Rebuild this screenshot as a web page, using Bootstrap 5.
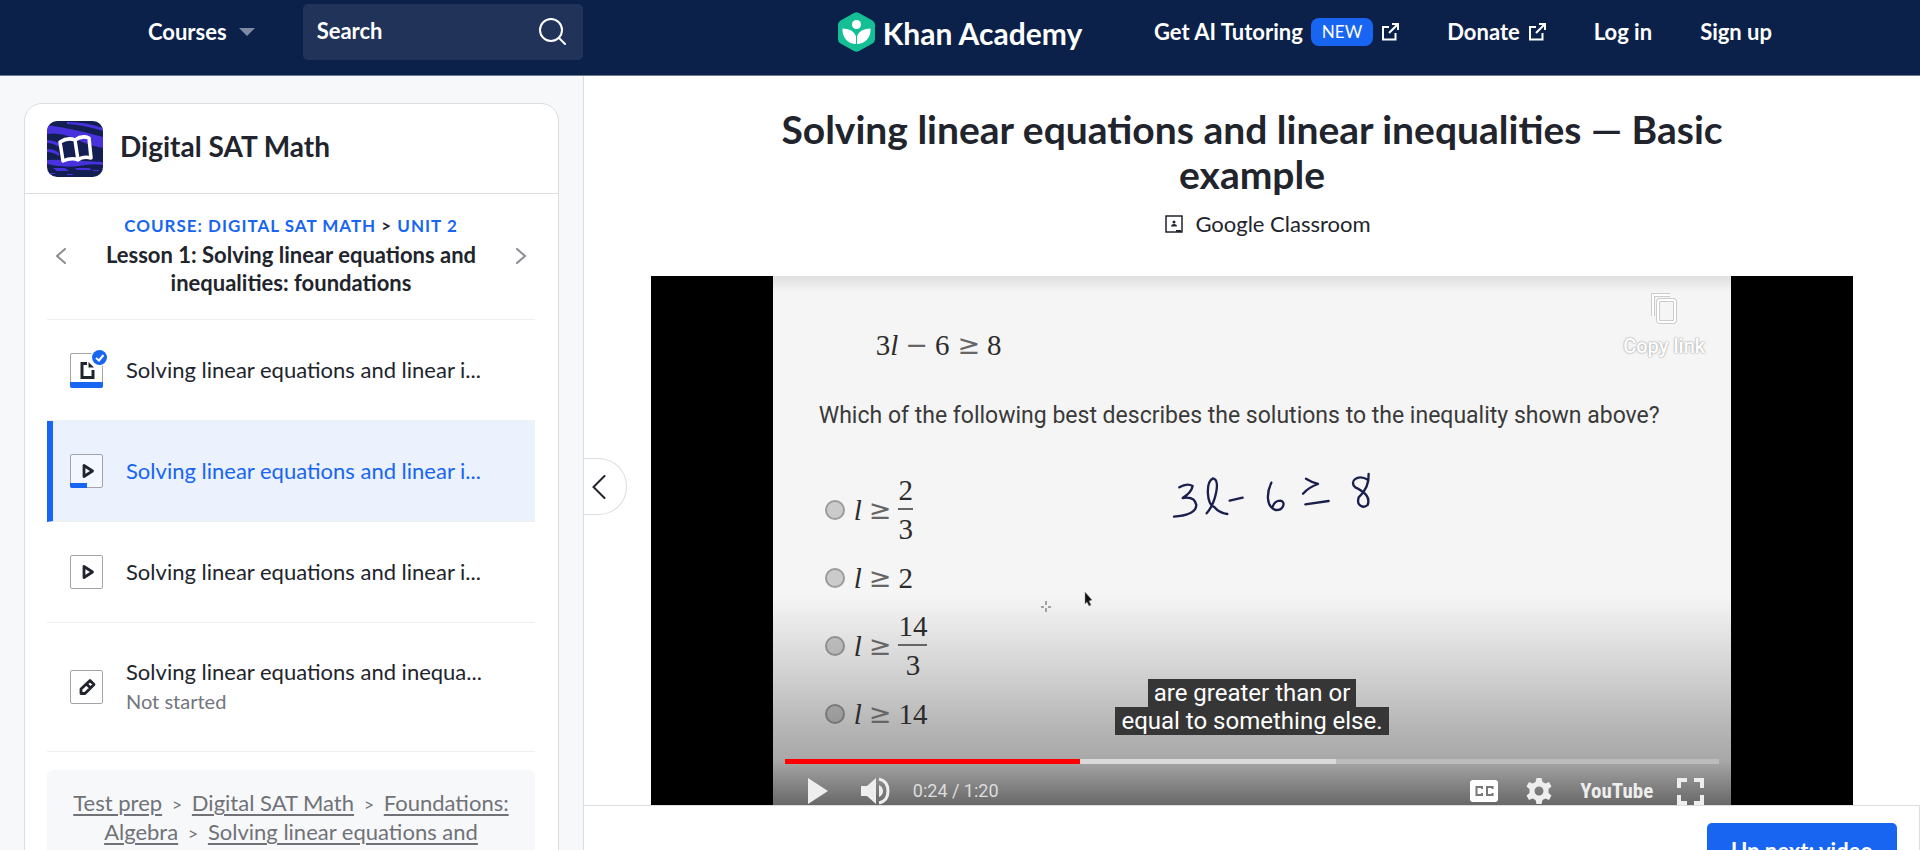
<!DOCTYPE html>
<html lang="en">
<head>
<meta charset="utf-8">
<meta name="viewport" content="width=device-width, initial-scale=1">
<title>Solving linear equations and linear inequalities — Basic example | Khan Academy</title>
<link href="https://cdn.jsdelivr.net/npm/bootstrap@5.3.0/dist/css/bootstrap.min.css" rel="stylesheet">
<style>
  :root { --ka-blue: #1865f2; --ka-navy: #0b2149; --ka-ink: #21242c; --ka-line: #dcdddf; --ka-soft: #f7f8fa; }
  body { font-family: Lato, "Open Sans", sans-serif; font-size: 22px; line-height: 28px; color: var(--ka-ink); }
  svg { display: block; flex: none; }

  /* Top bar */
  .site-bar { background: var(--ka-navy); padding: 4px 148px 15px; border-bottom: 1px solid #6c7a98; }
  .site-bar a, .site-bar button { color: #fff; font-weight: 700; text-decoration: none; }
  .side-group { flex: 1 1 0; }
  .search-box { width: 280px; height: 56px; background: #213358; border-radius: 5px; padding: 0 16px 2px 14px; margin-left: 48px; }
  .search-box input { font-weight: 700; color: #fff; outline: 0; line-height: 28px; }
  .search-box input::placeholder { color: #fff; opacity: 1; }
  .brand-name { font-size: 30px; line-height: 36px; padding-top: 2px; }
  .new-pill { background: var(--ka-blue); font-size: 17px; line-height: 28px; font-weight: 400; border-radius: 8px; padding: 0 11px; }

  /* Lesson sidebar */
  .lesson-side { width: 584px; flex: none; background: var(--ka-soft); border-right: 1px solid var(--ka-line); padding: 27px 24px 0; }
  .lesson-card { background: #fff; border: 1px solid var(--ka-line); border-radius: 18px 18px 0 0; }
  .course-head { padding: 17px 22px 16px; border-bottom: 1px solid var(--ka-line); gap: 17px; }
  .course-head h2 { font-size: 28px; line-height: 34px; font-weight: 700; margin: 0 0 6px; }
  .card-inner { padding: 0 23px 0 22px; }
  .lesson-nav { padding: 17px 0 22px; border-bottom: 1px solid #eeeff0; }
  .lesson-nav h3 { font-size: 22px; line-height: 28px; font-weight: 700; margin: 0; }
  .crumb-label { font-size: 17px; font-weight: 700; line-height: 30px; letter-spacing: 1px; text-transform: uppercase; }
  .crumb-label a { color: var(--ka-blue); text-decoration: none; }
  .nav-step { width: 28px; padding-top: 4px; color: #8b8d93; }
  .lesson-item { min-height: 101px; padding-left: 23px; gap: 23px; border-bottom: 1px solid #eeeff0; color: var(--ka-ink); text-decoration: none; }
  .lesson-item.current { background: #ebf2fe; color: var(--ka-blue); padding-left: 17px; border-left: 6px solid var(--ka-blue); }
  .lesson-item.tall { min-height: 129px; }
  .item-note { font-size: 20px; line-height: 30px; color: #73757c; }
  .trail-box { background: var(--ka-soft); border-radius: 6px; margin-top: 18px; padding: 19px 20px; text-align: center; color: #707278; }
  .trail-box a { color: #707278; text-underline-offset: 3px; }
  .trail-box span { font-size: 18px; margin: 0 4px; }

  /* Lesson content */
  .side-toggle { left: 0; top: 382px; width: 43px; height: 57px; background: #fff; border: 1px solid var(--ka-line); border-left: 0; border-radius: 0 28px 28px 0; padding: 0 0 0 8px; }
  .content-scroll { padding: 31px 5% 0; }
  .content-scroll h1 { font-size: 39px; line-height: 45px; font-weight: 700; max-width: 1000px; margin: 0 auto 13px; }
  .share-row { padding-left: 32px; }
  .classroom { color: var(--ka-ink); text-decoration: none; gap: 12px; }
  .player { background: #000; margin-top: 38px; padding: 0 122px; }
  .frame-area { color: #2c2c2c; padding-top: 44px; background:
      linear-gradient(#dfdfdf, #f5f5f500 16px),
      linear-gradient(#f5f5f500 320px, #e1e1e1 364px, #cbcbcb 410px, #b4b4b4 454px, #a8a8a8 484px, #888 506px, #646464 532px), #f5f5f5; }
  .math { font-family: "Liberation Serif", serif; font-size: 29px; line-height: 30px; }
  .math i { margin-right: 7px; }
  .rel { font-family: "DejaVu Sans", sans-serif; font-size: 27px; color: #666; margin-right: 7px; }
  .formula { height: 50px; padding-left: 103px; }
  .question { font-family: Roboto, sans-serif; font-size: 23px; line-height: 32px; margin: 30px 0 44px; padding-left: 46px; color: #3a3a3a; }
  .choices { padding-left: 52px; }
  .choice { height: 68px; }
  .choice input { appearance: none; width: 20px; height: 20px; border: 2px solid #0000003d; border-radius: 50%; background: #0000002b; margin: 0 9px 0 0; }
  .frac { line-height: 29px; text-align: center; }
  .frac span { display: block; padding-top: 5px; }
  .frac span:first-child { border-bottom: 2px solid #666; padding-top: 0; padding-bottom: 3px; }
  .ink-layer { left: 26%; top: 194px; }
  .copy-link { right: 26px; top: 16px; color: #fff; font: 500 20px/28px Roboto, sans-serif; text-shadow: 0 0 2px #777; }
  .caption-box { left: 0; right: 0; top: 403px; color: #fff; font: 24px/28px Roboto, sans-serif; }
  .caption-box span { background: #363636; padding: 0 6px; }
  .seek { height: 5px; margin: 11px 12px 0; background: #bcbcbc; }
  .control-row { height: 54px; padding: 0 27px 0 34px; color: #eee; }
  .time-text { font: 18px/24px Roboto, sans-serif; margin-left: 22px; color: #ddd; }
  .yt-word { font: 700 21px/26px "Liberation Sans Narrow", "Roboto Condensed", "DejaVu Sans Condensed", sans-serif; color: #eee; text-decoration: none; }
  .next-bar { height: 45px; border-top: 1px solid var(--ka-line); border-right: 1px solid var(--ka-line); background: #fff; padding: 17px 22px 0; }
  .btn-next { background: var(--ka-blue); color: #fff; border: 0; border-radius: 5px; height: 56px; padding: 0 24px; font-size: 22px; font-weight: 700; }
</style>
</head>
<body class="vh-100 overflow-hidden d-flex flex-column">

<header class="site-bar d-flex align-items-center">
  <div class="side-group d-flex align-items-center">
    <button type="button" class="border-0 bg-transparent p-0 d-flex align-items-center gap-2">
      <span>Courses</span>
      <svg class="ms-1" width="16" height="8" viewBox="0 0 16 8"><path d="M0 0h16L8 8z" fill="#7d8aa3"/></svg>
    </button>
    <form class="search-box d-flex align-items-center" role="search">
      <input class="border-0 bg-transparent p-0 flex-grow-1 w-50" type="search" placeholder="Search" aria-label="Search">
      <svg width="28" height="28" viewBox="0 0 28 28" fill="none" stroke="#fff" stroke-width="2" stroke-linecap="round"><circle cx="12" cy="13" r="11"/><path d="M20 21 26 27"/></svg>
    </form>
  </div>
  <a href="#" class="d-flex align-items-center gap-2">
    <svg width="37" height="40" viewBox="0 0 37 40"><path d="M16 1Q18.500-.5 21 1L34.500 8.500Q37 10 37 13V27Q37 30 34.500 31.500L21 39Q18.500 40.500 16 39L2.500 31.500Q0 30 0 27V13Q0 10 2.500 8.500z" fill="#14bf96"/><circle cx="18.500" cy="12.500" r="4.500" fill="#fff"/><path d="M4.500 16.500C12 16.500 17.500 20 18.500 26.500 19.500 20 25 16.500 32.500 16.500 33 26 27 32 18.500 32S4 26 4.500 16.500z" fill="#fff"/><path d="M18.500 20v12" stroke="#14bf96" stroke-width="1"/></svg>
    <span class="brand-name">Khan Academy</span>
  </a>
  <nav class="side-group d-flex align-items-center justify-content-end" aria-label="Account">
    <a href="#" class="d-flex align-items-center gap-2 me-5">Get AI Tutoring <span class="new-pill">NEW</span>
      <svg width="18" height="18" viewBox="0 0 18 18" fill="none" stroke="#fff" stroke-width="2"><path d="M8 4H2v12.500h12.500V10M11 1h6v6M17 1 8 10"/></svg></a>
    <a href="#" class="d-flex align-items-center gap-2 me-5">Donate
      <svg width="18" height="18" viewBox="0 0 18 18" fill="none" stroke="#fff" stroke-width="2"><path d="M8 4H2v12.500h12.500V10M11 1h6v6M17 1 8 10"/></svg></a>
    <a href="#" class="me-5">Log in</a>
    <a href="#">Sign up</a>
  </nav>
</header>

<div class="d-flex flex-grow-1 overflow-hidden">
  <aside class="lesson-side">
    <div class="lesson-card">
      <div class="course-head d-flex align-items-center">
        <svg width="56" height="56" viewBox="0 0 56 56"><defs><clipPath id="tile"><rect width="56" height="56" rx="10"/></clipPath></defs><g clip-path="url(#tile)"><path fill="#131f52" d="M0 0h56v56H0z"/><g fill="#4732dd"><path d="M0 4Q28 8 56 16V27Q40 24 24 16 12 11 0 13z"/><path d="M20 1q20 0 36 6v3Q38 4 20 3zM0 19q6 0 14 4l-2 3Q6 22 0 22zM0 28q8 0 12 4v3Q6 31 0 31zM0 39q22-1 36 1l20 1v3q-12-2-24 1-16 2-32-2z"/><path d="M6 47h12l4 3H10zM28 47h14l3 2H30zM0 52h8v1H0zM20 53h6v1h-6zM46 49h6v1h-6z"/></g><path d="M13 21q8-5 15-2 7-5 14-2l2 20q-8-2-13 2-6-3-15 1zM28 19l3 20" fill="none" stroke="#fff" stroke-width="3.500" stroke-linejoin="round"/></g></svg>
        <h2>Digital SAT Math</h2>
      </div>
      <div class="card-inner">
        <div class="lesson-nav d-flex align-items-center">
          <a href="#" class="nav-step d-flex justify-content-center" aria-label="Previous lesson"><svg width="10" height="16" viewBox="0 0 10 16" fill="none" stroke="currentColor" stroke-width="2" stroke-linecap="round"><path d="M9 1 1 8l8 7"/></svg></a>
          <div class="flex-grow-1 text-center">
            <div class="crumb-label"><a href="#">Course: Digital SAT Math</a> &gt; <a href="#">Unit 2</a></div>
            <h3>Lesson 1: Solving linear equations and<br>inequalities: foundations</h3>
          </div>
          <a href="#" class="nav-step d-flex justify-content-center" aria-label="Next lesson"><svg width="10" height="16" viewBox="0 0 10 16" fill="none" stroke="currentColor" stroke-width="2" stroke-linecap="round"><path d="m1 1 8 7-8 7"/></svg></a>
        </div>
        <a href="#" class="lesson-item d-flex align-items-center">
          <svg width="33" height="35" viewBox="0 0 33 35" overflow="visible"><rect x=".5" y=".5" width="32" height="34" rx="1.500" fill="#fff" stroke="#a2a4a9"/><path d="M0 29h33v4q0 2-2 2H2q-2 0-2-2z" fill="#1865f2"/><path d="M17 10.500h-5v14h11V17" fill="none" stroke="#21242c" stroke-width="3"/><path d="m18.500 9 5.500 5.500h-5.500z" fill="#21242c"/><circle cx="29.500" cy="4.500" r="9" fill="#fff"/><circle cx="29.500" cy="4.500" r="7.500" fill="#1865f2"/><path d="m26 5 3 2.500 4.500-5.500" fill="none" stroke="#fff" stroke-width="2"/></svg>
          <span>Solving linear equations and linear i...</span>
        </a>
        <a href="#" class="lesson-item current d-flex align-items-center" aria-current="page">
          <svg width="33" height="34" viewBox="0 0 33 34"><rect x=".5" y=".5" width="32" height="33" rx="1.500" fill="#f3f7ff" stroke="#a2a4a9"/><path d="M0 29h17v5H2q-2 0-2-2z" fill="#1865f2"/><path d="M14 11.500v11l8.500-5.500z" fill="none" stroke="#21242c" stroke-width="2.800" stroke-linejoin="round"/></svg>
          <span>Solving linear equations and linear i...</span>
        </a>
        <a href="#" class="lesson-item d-flex align-items-center">
          <svg width="33" height="34" viewBox="0 0 33 34"><rect x=".5" y=".5" width="32" height="33" rx="1.500" fill="#fff" stroke="#a2a4a9"/><path d="M14 11.500v11l8.500-5.500z" fill="none" stroke="#21242c" stroke-width="2.800" stroke-linejoin="round"/></svg>
          <span>Solving linear equations and linear i...</span>
        </a>
        <a href="#" class="lesson-item tall d-flex align-items-center">
          <svg width="33" height="34" viewBox="0 0 33 34"><rect x=".5" y=".5" width="32" height="33" rx="1.500" fill="#fff" stroke="#a2a4a9"/><path d="M11 23.500v-4.500l9-8.500 4 4-9 9zM16.500 14l4 4" fill="none" stroke="#21242c" stroke-width="2.800" stroke-linejoin="round"/></svg>
          <span><span class="d-block">Solving linear equations and inequa...</span><span class="item-note d-block">Not started</span></span>
        </a>
        <nav class="trail-box" aria-label="Breadcrumb"><a href="#">Test prep</a> <span>&gt;</span> <a href="#">Digital SAT Math</a> <span>&gt;</span> <a href="#">Foundations: Algebra</a> <span>&gt;</span> <a href="#">Solving linear equations and inequalities: foundations</a></nav>
      </div>
    </div>
  </aside>

  <main class="flex-grow-1 d-flex flex-column position-relative overflow-hidden">
    <button type="button" class="side-toggle position-absolute" aria-label="Hide lesson list"><svg width="14" height="24" viewBox="0 0 14 24" fill="none" stroke="#21242c" stroke-width="2" stroke-linecap="round"><path d="M12.500 1 1.500 12l11 11"/></svg></button>
    <div class="content-scroll flex-grow-1 overflow-hidden">
      <h1 class="text-center">Solving linear equations and linear inequalities — Basic example</h1>
      <div class="share-row d-flex justify-content-center">
        <a href="#" class="classroom d-flex align-items-center"><svg width="18" height="18" viewBox="0 0 18 18"><path d="M1 1h16v16H1z" fill="none" stroke="#21242c" stroke-width="1.500"/><circle cx="9" cy="7" r="1.500" fill="#21242c"/><path d="M6 11.500q0-2.500 3-2.500t3 2.500zM11 15h5v2h-5z" fill="#21242c"/></svg>Google Classroom</a>
      </div>

      <section class="player" aria-label="Video player">
        <div class="frame-area position-relative">
          <div class="formula math d-flex align-items-center"><span>3</span><i>l</i><span class="rel">−</span><span class="me-2">6</span><span class="rel">≥</span><span>8</span></div>
          <p class="question text-nowrap">Which of the following best describes the solutions to the inequality shown above?</p>
          <div class="choices math">
            <label class="choice d-flex align-items-center"><input type="radio" name="answer"><i>l</i><span class="rel">≥</span><span class="frac"><span>2</span><span>3</span></span></label>
            <label class="choice d-flex align-items-center"><input type="radio" name="answer"><i>l</i><span class="rel">≥</span><span>2</span></label>
            <label class="choice d-flex align-items-center"><input type="radio" name="answer"><i>l</i><span class="rel">≥</span><span class="frac"><span>14</span><span>3</span></span></label>
            <label class="choice d-flex align-items-center"><input type="radio" name="answer"><i>l</i><span class="rel">≥</span><span>14</span></label>
          </div>

          <!-- Pen strokes, crosshair and pointer on the slide -->
          <svg class="ink-layer position-absolute" width="360" height="150" viewBox="0 0 360 150" role="img" aria-label="Handwritten inequality">
            <g transform="translate(130 -10) scale(.3333)" fill="none" stroke="#1b1f4d" stroke-width="7" stroke-linecap="round" stroke-linejoin="round">
              <path d="M82 82Q105 68 122 78 118 98 92 114 128 108 133 135 132 165 66 170"/>
              <path d="M164 160C190 130 207 60 183 55 160 66 164 138 187 141Q200 158 226 162"/>
              <path d="M233 122 272 113"/>
              <path d="M358 68C345 95 340 138 370 150 396 152 402 124 385 122Q368 122 362 140"/>
              <path d="M462 56Q480 67 498 72 470 82 453 101M460 133 530 123"/>
              <path d="M649 60C615 40 590 66 610 82 640 96 656 112 647 135 635 146 612 138 620 112Q652 84 650 42"/>
            </g>
            <path d="M24 131v4m0 3v4m-5-5h3m4 0h3" stroke="#888" stroke-width="1.500"/>
            <path d="m63 122 7 8-3 1 2 4-2 1-2-4-2 2z" fill="#111" stroke="#999" stroke-width=".5"/>
          </svg>

          <button type="button" class="copy-link position-absolute border-0 bg-transparent p-0 d-flex flex-column align-items-center gap-2">
            <svg width="28" height="32" viewBox="0 0 28 32" fill="none"><g stroke="#ccc" stroke-width="4"><path d="M3 24V3h17"/><rect x="8" y="8" width="17" height="22" rx="2"/></g><g stroke="#fff" stroke-width="2"><path d="M3 24V3h17"/><rect x="8" y="8" width="17" height="22" rx="2"/></g></svg>
            <span>Copy link</span>
          </button>

          <div class="caption-box position-absolute text-center"><span class="d-inline-block">are greater than or</span><br><span class="d-inline-block">equal to something else.</span></div>

          <div class="overflow-hidden">
            <div class="seek d-flex" role="progressbar" aria-label="Playback position" aria-valuenow="24" aria-valuemin="0" aria-valuemax="80">
              <div style="width:31.600%;background:#f00"></div><div style="width:27.400%;background:#dadada"></div>
            </div>
          </div>
          <div class="control-row d-flex align-items-center">
            <button type="button" class="border-0 bg-transparent p-0" aria-label="Play"><svg width="22" height="26" viewBox="0 0 22 26"><path d="M1 0 21 13 1 26z" fill="#eee"/></svg></button>
            <button type="button" class="border-0 bg-transparent p-0 ms-4 ps-2" aria-label="Mute"><svg width="30" height="28" viewBox="0 0 30 28"><path d="M0 9h6l9-8v26l-9-8H0z" fill="#eee"/><path d="M18 8q4 2 4 6t-4 6z" fill="#eee"/><path d="M18 2q9 2 9 12t-9 12" fill="none" stroke="#eee" stroke-width="3"/></svg></button>
            <span class="time-text me-auto">0:24 / 1:20</span>
            <button type="button" class="border-0 bg-transparent p-0" aria-label="Subtitles"><svg width="28" height="24" viewBox="0 0 28 24"><rect y="1" width="28" height="22" rx="3" fill="#fff"/><path d="M12 10V8H6.500v8H12v-2M22.500 10V8H17v8h5.500v-2" fill="none" stroke="#777" stroke-width="2"/></svg></button>
            <button type="button" class="border-0 bg-transparent p-0 mx-4" aria-label="Settings"><svg class="mx-1" width="26" height="28" viewBox="0 0 26 28"><path fill="#eee" fill-rule="evenodd" d="M10.500 1h5l1 4 3 1.500 3.500-1.500 2.500 4.500-3 2.500v4l3 2.500-2.500 4.500-3.500-1.500-3 1.500-1 4h-5l-1-4-3-1.500L3 23 .500 18.500l3-2.500v-4l-3-2.500L3 5l3.500 1.500 3-1.500zM13 9.500a4.500 4.500 0 1 0 0 9 4.500 4.500 0 0 0 0-9z"/></svg></button>
            <a href="#" class="yt-word">YouTube</a>
            <button type="button" class="border-0 bg-transparent p-0 ms-4" aria-label="Full screen"><svg width="27" height="27" viewBox="0 0 27 27" fill="none" stroke="#eee" stroke-width="4"><path d="M2 10V2h8M17 2h8v8M2 17v8h8M17 25h8v-8"/></svg></button>
          </div>
        </div>
      </section>
    </div>
    <footer class="next-bar d-flex justify-content-end align-items-start flex-shrink-0 overflow-hidden">
      <button type="button" class="btn-next flex-shrink-0">Up next: video</button>
    </footer>
  </main>
</div>
<script src="https://cdn.jsdelivr.net/npm/bootstrap@5.3.0/dist/js/bootstrap.bundle.min.js"></script>
</body>
</html>
